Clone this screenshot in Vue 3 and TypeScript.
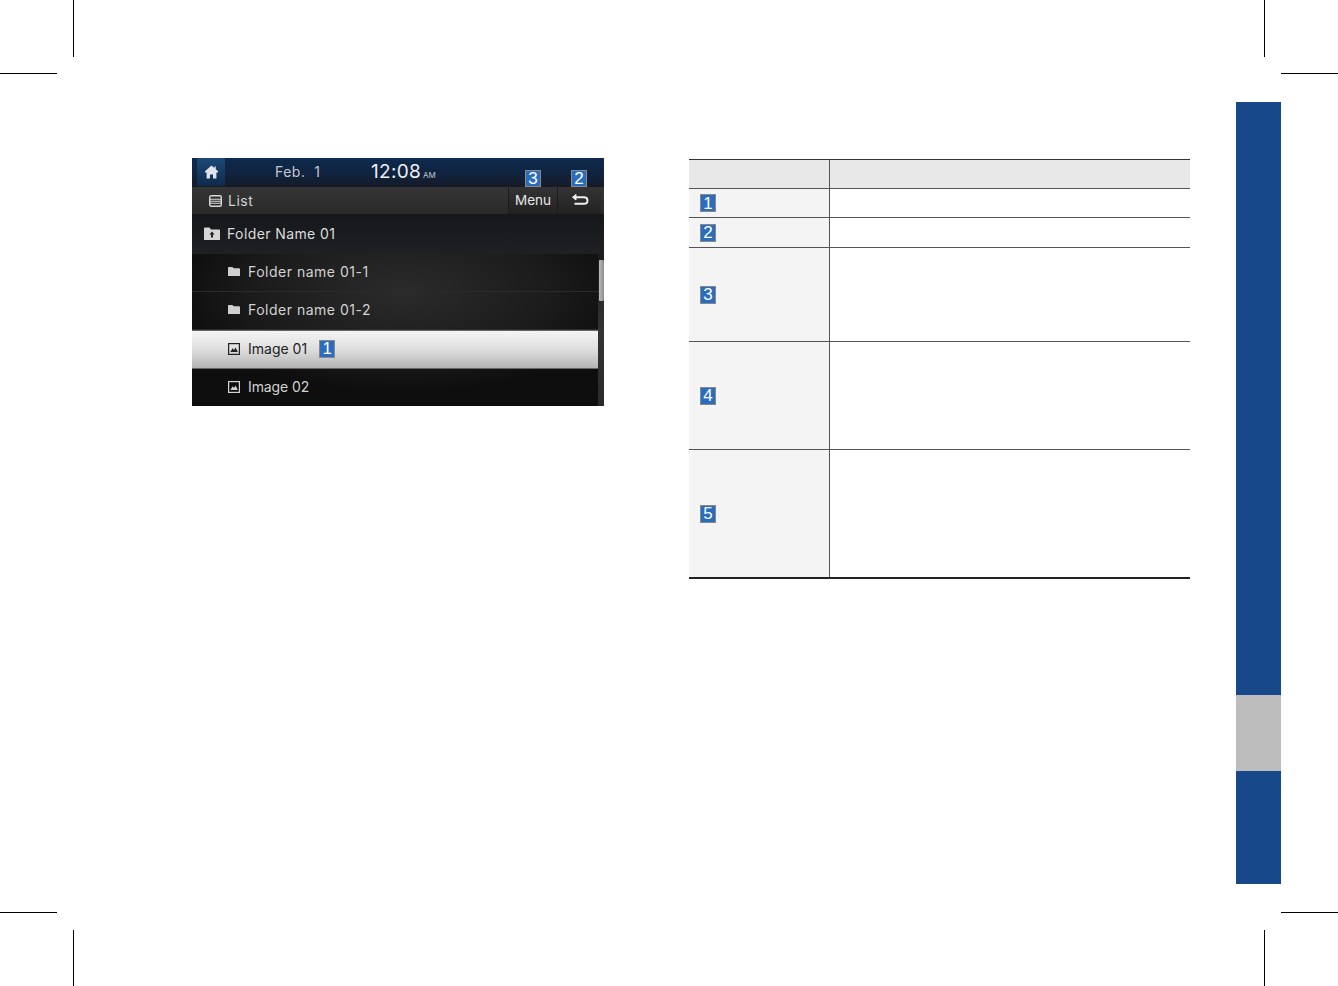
<script setup lang="ts">
interface Row {
  id: number
  height: number
}

// table rows, heights read from the manual page
const rows: Row[] = [
  { id: 1, height: 28 },
  { id: 2, height: 29 },
  { id: 3, height: 93 },
  { id: 4, height: 107 },
  { id: 5, height: 127 },
]

const marks = ['tl-v', 'tl-h', 'tr-v', 'tr-h', 'bl-v', 'bl-h', 'br-v', 'br-h']
</script>

<template>
  <div class="page">
    <!-- crop marks -->
    <i v-for="m in marks" :key="m" class="mark" :class="m" />

    <div class="screen">
      <div class="status">
        <div class="home">
          <svg width="13" height="14" viewBox="0 0 13 14">
            <path d="M6.5 .5 L9.4 3 V1.4 H10.8 V4.2 L13 6.2 V7.4 H11.4 V13.6 H8 V9.4 H5 V13.6 H1.6 V7.4 H0 V6.2 Z" fill="#dfe4ea" />
          </svg>
        </div>
        <span class="date">Feb.&nbsp; 1</span>
        <span class="time">12:08</span>
        <span class="ampm">AM</span>
      </div>

      <div class="titlebar">
        <svg class="list-icon" width="13" height="12" viewBox="0 0 13 12">
          <rect x=".7" y=".7" width="11.6" height="10.6" rx="1.5" fill="none" stroke="#d8d8d8" stroke-width="1.4" />
          <path d="M1 4.2H12M1 6.2H12M1 8.2H12" stroke="#d8d8d8" stroke-width="1.1" />
        </svg>
        <span class="title">List</span>
        <div class="tbtn menu">Menu<span class="badge over">3</span></div>
        <div class="tbtn back">
          <svg width="18" height="13" viewBox="0 0 18 13">
            <path d="M5 1.5 L1.5 4.2 L5 7 Z" fill="#eee" stroke="#eee" />
            <path d="M3 4.2 H13 Q16.5 4.2 16.5 7.4 Q16.5 10.8 13 10.8 H3.5" fill="none" stroke="#eee" stroke-width="1.9" />
          </svg>
          <span class="badge over">2</span>
        </div>
      </div>

      <div class="parent">
        <svg width="16" height="13" viewBox="0 0 16 13">
          <path d="M0 1.5 Q0 .5 1 .5 H5.5 L7 2.4 H15 Q16 2.4 16 3.4 V13 H0 Z" fill="#d6d6d6" />
          <path d="M8 4.6 L10.6 7.6 H9 V10.6 H7 V7.6 H5.4 Z" fill="#222" />
        </svg>
        <span>Folder Name 01</span>
      </div>

      <div class="list-wrap">
        <div class="items">
          <div class="item">
            <svg class="folder" width="12" height="9" viewBox="0 0 12 9">
              <path d="M0 1 Q0 0 1 0 H4.5 L5.6 1.2 H11 Q12 1.2 12 2.2 V9 H0 Z" fill="#cfcfcf" />
            </svg>
            <span>Folder name 01-1</span>
          </div>
          <div class="item">
            <svg class="folder" width="12" height="9" viewBox="0 0 12 9">
              <path d="M0 1 Q0 0 1 0 H4.5 L5.6 1.2 H11 Q12 1.2 12 2.2 V9 H0 Z" fill="#cfcfcf" />
            </svg>
            <span>Folder name 01-2</span>
          </div>
          <div class="item selected">
            <svg class="pic" width="12" height="12" viewBox="0 0 12 12">
              <rect x=".6" y=".6" width="10.8" height="10.8" fill="none" stroke="#222" stroke-width="1.2" />
              <path d="M2.4 9 L4.6 5.2 L6 7 L7.6 4.4 L9.8 9 Z" fill="#222" />
            </svg>
            <span>Image 01</span>
            <span class="badge inline">1</span>
          </div>
          <div class="item last">
            <svg class="pic" width="12" height="12" viewBox="0 0 12 12">
              <rect x=".6" y=".6" width="10.8" height="10.8" fill="none" stroke="#d4d4d4" stroke-width="1.2" />
              <path d="M2.4 9 L4.6 5.2 L6 7 L7.6 4.4 L9.8 9 Z" fill="#d4d4d4" />
            </svg>
            <span>Image 02</span>
          </div>
        </div>
        <div class="scrolltrack"><div class="thumb" /></div>
      </div>
    </div>

    <div class="table">
      <div class="thead">
        <div class="c1" />
        <div class="c2" />
      </div>
      <div v-for="r in rows" :key="r.id" class="trow" :style="{ height: r.height + 'px' }">
        <div class="c1"><span class="badge">{{ r.id }}</span></div>
        <div class="c2" />
      </div>
    </div>

    <div class="side">
      <div class="side-a" />
      <div class="side-b" />
      <div class="side-c" />
    </div>
  </div>
</template>

<style>
body {
  margin: 0;
  background: #fff;
}
</style>

<style scoped>
.page {
  position: relative;
  width: 1338px;
  height: 986px;
  overflow: hidden;
  display: flex;
  align-items: flex-start;
  padding-left: 192px;
  box-sizing: border-box;
  font-family: Inter, "Liberation Sans", sans-serif;
}

.mark {
  position: absolute;
  background: #000;
}
.tl-v, .tr-v, .bl-v, .br-v { width: 1px; height: 57px; }
.tl-h, .tr-h, .bl-h, .br-h { width: 57px; height: 1px; }
.tl-v { left: 73px; top: 0; }
.tl-h { left: 0; top: 73px; }
.tr-v { left: 1264px; top: 0; }
.tr-h { left: 1281px; top: 73px; }
.bl-v { left: 73px; top: 930px; }
.bl-h { left: 0; top: 912px; }
.br-v { left: 1264px; top: 930px; }
.br-h { left: 1281px; top: 912px; }

.badge {
  display: inline-flex;
  align-items: center;
  justify-content: center;
  box-sizing: border-box;
  width: 16px;
  height: 18px;
  background: #2a6dbf;
  border: 1px solid #888;
  color: #fff;
  font-family: "Liberation Sans", Arial, sans-serif;
  font-size: 17px;
  line-height: 1;
  letter-spacing: 0;
}

/* head unit screenshot */
.screen {
  width: 412px;
  height: 248px;
  margin-top: 158px;
  flex: none;
  background: #111;
  color: #d2d2d2;
  font-size: 14px;
  letter-spacing: .5px;
}

.status {
  height: 29px;
  display: flex;
  align-items: flex-start;
  background: linear-gradient(180deg, #0e2a4d 0%, #10233f 55%, #151b26 100%);
}
.status span {
  line-height: 28px;
}
.home {
  width: 28px;
  height: 28px;
  margin-left: 5px;
  display: flex;
  align-items: center;
  justify-content: center;
  background: linear-gradient(180deg, #1c4a7a, #10294a);
}
.date {
  margin-left: 50px;
  width: 96px;
  color: #c2c8d0;
}
.time {
  font-size: 19px;
  color: #eef0f3;
  letter-spacing: .3px;
}
.ampm {
  font-size: 8px;
  margin: 3px 0 0 2px;
  letter-spacing: 0;
  color: #c2c8d0;
}

.titlebar {
  height: 27px;
  display: flex;
  align-items: center;
  background: linear-gradient(180deg, #353535, #2a2a2a);
}
.list-icon {
  margin-left: 17px;
}
.title {
  margin-left: 6px;
  flex: 1;
  padding-bottom: 1px;
}
.tbtn {
  position: relative;
  height: 27px;
  display: flex;
  align-items: center;
  justify-content: center;
  box-sizing: border-box;
  background: linear-gradient(180deg, #343434, #222);
  border-left: 1px solid #1c1c1c;
  color: #e6e6e6;
  font-size: 13.5px;
  letter-spacing: 0;
  padding-bottom: 2px;
}
.menu { width: 49px; }
.back { width: 44px; margin-right: 3px; }
.badge.over {
  position: absolute;
  top: -17px;
  height: 17px;
}
.menu .badge.over { left: 16px; }
.back .badge.over { left: 13px; }

.parent {
  height: 40px;
  box-sizing: border-box;
  padding: 0 0 2px 12px;
  display: flex;
  align-items: center;
  gap: 7px;
  background: linear-gradient(180deg, #15171b, #1e2023);
  color: #dcdcdc;
  letter-spacing: .4px;
}

.list-wrap {
  height: 152px;
  display: flex;
}
.items {
  flex: 1;
  background: radial-gradient(ellipse 230px 100px at 52% 25%, #2b2b2b 0%, #1b1b1b 65%, #0e0e0e 100%);
}
.item {
  height: 38px;
  box-sizing: border-box;
  display: flex;
  align-items: center;
  padding: 0 0 2px 36px;
  border-bottom: 1px solid #2a2a2a;
}
.item .folder,
.item .pic {
  margin-right: 8px;
  flex: none;
}
.item.selected {
  height: 39px;
  padding-bottom: 2px;
  background: linear-gradient(180deg, #f4f4f4 0%, #dedede 50%, #b4b4b4 100%);
  color: #222;
  border-top: 1px solid #666;
  border-bottom: 1px solid #666;
  letter-spacing: 0;
}
.item.last {
  border-bottom: 0;
  height: 37px;
  padding-bottom: 2px;
  letter-spacing: -.1px;
}
.badge.inline {
  margin-left: 12px;
}

.scrolltrack {
  width: 6px;
  box-sizing: border-box;
  padding-left: 1px;
  background: linear-gradient(180deg, #1c1c1c, #333 50%, #2a2a2a);
}
.thumb {
  width: 5px;
  height: 41px;
  margin-top: 6px;
  border-radius: 1px;
  background: linear-gradient(90deg, #bbb, #8c8c8c);
}

/* description table */
.table {
  width: 501px;
  margin: 159px 0 0 85px;
  flex: none;
  border-top: 1px solid #333;
  border-bottom: 2px solid #222;
}
.thead {
  display: flex;
  height: 28px;
  border-bottom: 1px solid #555;
  background: #e8e8e8;
}
.trow {
  display: flex;
  box-sizing: content-box;
}
.trow + .trow {
  border-top: 1px solid #555;
}
.c1 {
  width: 140px;
  flex: none;
  display: flex;
  align-items: center;
  padding-left: 11px;
  box-sizing: border-box;
  background: #f4f4f4;
}
.thead .c1 { background: #e8e8e8; }
.c2 {
  flex: 1;
  border-left: 1px solid #555;
}

/* chapter tab */
.side {
  width: 45px;
  margin: 102px 0 0 46px;
  flex: none;
  display: flex;
  flex-direction: column;
}
.side-a { height: 593px; background: #17488a; }
.side-b { height: 76px; background: #bdbdbd; }
.side-c { height: 113px; background: #17488a; }
</style>
